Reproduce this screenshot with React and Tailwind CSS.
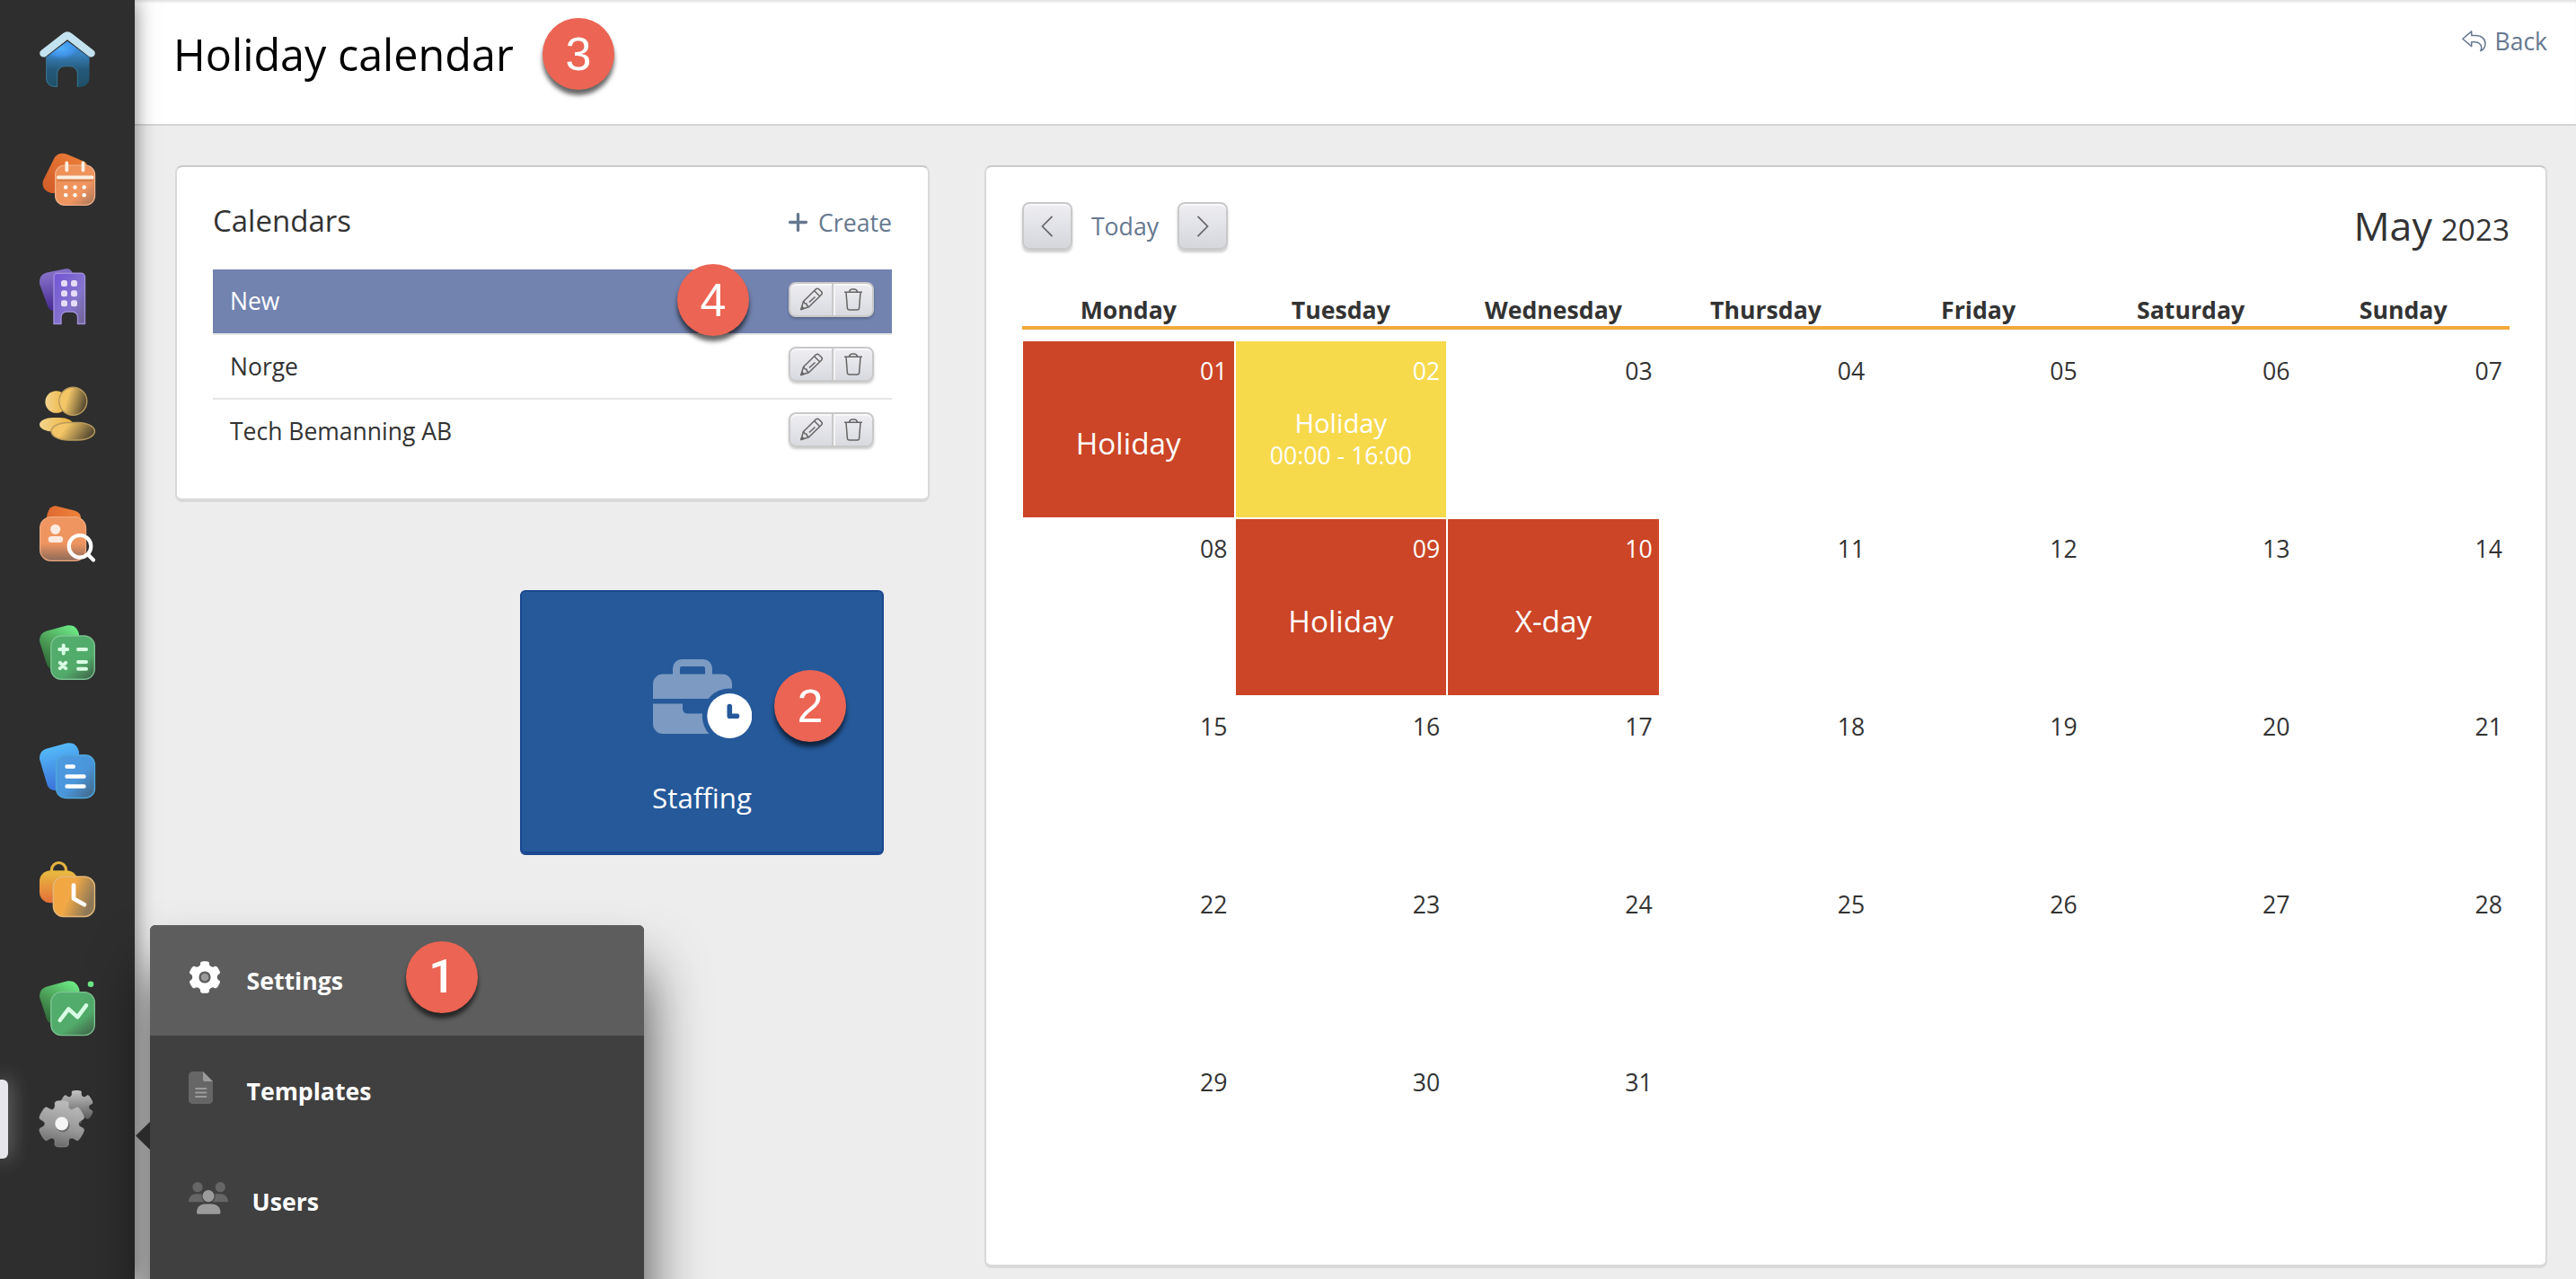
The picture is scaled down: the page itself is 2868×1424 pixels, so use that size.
import { clsx } from 'clsx';

const WEEKDAYS = ['Monday', 'Tuesday', 'Wednesday', 'Thursday', 'Friday', 'Saturday', 'Sunday'];

const CALENDARS = [
    { name: 'New', active: true },
    { name: 'Norge' },
    { name: 'Tech Bemanning AB' },
];

const HOLIDAYS = {
    1: { label: 'Holiday' },
    2: { label: 'Holiday', hours: '00:00 - 16:00' },
    9: { label: 'Holiday' },
    10: { label: 'X-day' },
};

// Six-toothed gear outline with softened corners
const gearPath = (cx, cy, outer, inner, tip = 14, base = 23, soft = 0.38) => {
    const points = [];
    for (let i = 0; i < 6; i++) {
        [[inner, -base], [outer, -tip], [outer, tip], [inner, base]].forEach(([r, offset]) => {
            const angle = ((i * 60 - 90 + offset) * Math.PI) / 180;
            points.push([cx + r * Math.cos(angle), cy + r * Math.sin(angle)]);
        });
    }
    const between = (a, b) => `${(a[0] + (b[0] - a[0]) * soft).toFixed(2)} ${(a[1] + (b[1] - a[1]) * soft).toFixed(2)}`;
    const d = points.map((p, i) => {
        const prev = points[(i + points.length - 1) % points.length];
        const next = points[(i + 1) % points.length];
        return `${i ? 'L' : 'M'}${between(p, prev)}Q${p[0].toFixed(2)} ${p[1].toFixed(2)} ${between(p, next)}`;
    });
    return `${d.join('')}Z`;
};

const Gradient = ({ id, from, via, to, x1 = 0, y1 = 0, x2 = 1, y2 = 1, stop = '60%' }) => (
    <linearGradient id={id} x1={x1} y1={y1} x2={x2} y2={y2}>
        <stop offset="0%" stopColor={from} />
        {via && <stop offset={stop} stopColor={via} />}
        <stop offset="100%" stopColor={to} />
    </linearGradient>
);

const NavIcon = ({ children, className }) => (
    <svg viewBox="0 0 62 62" className={clsx("w-[62px] h-[62px] shrink-0 overflow-visible", className)} fill="none">
        {children}
    </svg>
);

const HomeIcon = () => (
    <NavIcon>
        <defs>
            <Gradient id="home" from="#4aa5f6" via="#24597a" to="#1f4f66" x2={0} stop="62%" />
            <radialGradient id="homeGlow" cx="0.35" cy="0.28" r="0.5">
                <stop offset="0%" stopColor="#4fb0fa" />
                <stop offset="60%" stopColor="#4195ee" stopOpacity="0.8" />
                <stop offset="100%" stopColor="#2d6db0" stopOpacity="0" />
            </radialGradient>
        </defs>
        <path d="M31 11 55.5 29V52a10 10 0 0 1-10 10H42V47a8 8 0 0 0-8-8h-6a8 8 0 0 0-8 8V62h-3A10 10 0 0 1 7 52V29Z" fill="url(#home)" />
        <path d="M31 11 55.5 29V39H7V29Z" fill="url(#homeGlow)" />
        <path d="M7.6 28V52a9.4 9.4 0 0 0 9.4 9.4h2.6V47a8.4 8.4 0 0 1 8.4-8.4h6a8.4 8.4 0 0 1 8.4 8.4V61.4" stroke="#356f8b" strokeWidth="1.2" />
        <path d="M4.5 24.3 28.6 5.6q2.4-1.8 4.8 0L57.5 24.3" stroke="#c3e2ef" strokeWidth="8.6" strokeLinecap="round" strokeLinejoin="round" />
    </NavIcon>
);

const CalendarIcon = () => (
    <NavIcon>
        <defs>
            <Gradient id="calBack" from="#f08238" to="#cf5a28" x1={1} x2={0} />
            <Gradient id="calFront" from="#ee8f55" via="#ef9560" to="#a5745a" stop="65%" />
        </defs>
        <path d="M15 12C17.5 5 23 2 30 4.5L50 13Q55 16 53 22L40 48H13C6 46 2 41 4 34Z" fill="url(#calBack)" />
        <rect x="17.6" y="17" width="44" height="44.5" rx="10.5" fill="url(#calFront)" stroke="#f2b48f" strokeWidth="1.2" />
        <path d="M21 33.5h37" stroke="#c4703a" strokeWidth="3" strokeLinecap="round" opacity="0.6" />
        <path d="M21 30.5H58.5" stroke="#fbeee0" strokeWidth="4" strokeLinecap="round" />
        <path d="M30.3 14.5v8M48.5 14.5v8" stroke="#fbeee0" strokeWidth="3.8" strokeLinecap="round" />
        <g fill="#fff">
            {[41.5, 50.3].map((y) => (
                <g key={y}>
                    <circle cx="29.2" cy={y} r="2.2" />
                    <circle cx="39.5" cy={y} r="2.2" />
                    <circle cx="49.7" cy={y} r="2.2" />
                </g>
            ))}
        </g>
    </NavIcon>
);

const BuildingIcon = () => (
    <NavIcon>
        <defs>
            <Gradient id="bldBack" from="#8d79cf" to="#44288f" x1={0.2} x2={0.4} />
            <Gradient id="bldFront" from="#7154d6" via="#8574cd" to="#6e6390" />
        </defs>
        <path d="M0 17C-.5 9 3 6 8 4.5L28 .5C34-.5 36 2 38 8V47H15C10.5 46 9.5 43 8.5 40Z" fill="url(#bldBack)" />
        <path d="M20 5.2H46.5a4 4 0 0 1 4 4V61.5H42.5V54a6 6 0 0 0-6-6H30a6 6 0 0 0-6 6V61.5H16V9.2a4 4 0 0 1 4-4Z" fill="url(#bldFront)" stroke="#a08fd9" strokeWidth="1.4" />
        <g fill="#e6dcf8">
            {[13, 24.2, 35.2].map((y) => (
                <g key={y}>
                    <rect x="24" y={y} width="7" height="7" rx="2.5" />
                    <rect x="35" y={y} width="7" height="7" rx="2.5" />
                </g>
            ))}
        </g>
    </NavIcon>
);

const PeopleIcon = () => (
    <NavIcon>
        <defs>
            <Gradient id="pplBack" from="#f3d58f" to="#edb23a" y2={0} />
            <Gradient id="pplFront" from="#f5c566" via="#f3c667" to="#5e5034" y2={0.3} stop="38%" />
        </defs>
        <circle cx="18.7" cy="16.5" r="12.3" fill="url(#pplBack)" />
        <rect x="0" y="34" width="37.5" height="15.5" rx="15" ry="7.7" fill="url(#pplBack)" />
        <circle cx="37.3" cy="15.7" r="15.5" fill="url(#pplFront)" stroke="#b89a5c" strokeWidth="1.4" />
        <rect x="13" y="39.5" width="48.5" height="19.5" rx="19" ry="9.7" fill="url(#pplFront)" stroke="#b89a5c" strokeWidth="1.4" />
    </NavIcon>
);

const SearchIcon = () => (
    <NavIcon>
        <defs>
            <Gradient id="srchBack" from="#de692f" to="#f0843b" y2={0} />
            <Gradient id="srchFront" from="#ef9560" via="#ef9560" to="#8d6a5a" x2={0} />
        </defs>
        <path d="M7.5 16C8.5 5 12 .2 18 .2L39 5.5C44 7 46.5 10 46 16Z" fill="url(#srchBack)" />
        <rect x=".6" y="12.6" width="51" height="48.8" rx="12.5" fill="url(#srchFront)" stroke="#f0aa80" strokeWidth="1.2" />
        <circle cx="17.7" cy="26.3" r="5.6" fill="#fdeae0" />
        <rect x="9.7" y="34" width="16.5" height="7" rx="3.5" fill="#fdeae0" />
        <circle cx="45" cy="45.3" r="12.3" stroke="#fff" strokeWidth="4.2" />
        <path d="M54 54.5 60 60.5" stroke="#fff" strokeWidth="4.2" strokeLinecap="round" />
    </NavIcon>
);

const CalculatorIcon = () => (
    <NavIcon>
        <defs>
            <Gradient id="greenBack" from="#6ff08a" via="#4a9a54" to="#2f6a38" x1={0.9} x2={0.3} />
            <Gradient id="greenFront" from="#52ad6c" via="#52ab6a" to="#3d5c45" x1={0.3} />
        </defs>
        <path d="M0 19C0 12 3 9 8 7.5L30 1.5C37 0 42 3 44 11V50H14C10 49 8.5 46 7.5 43Z" fill="url(#greenBack)" />
        <rect x="12.8" y="13" width="48.5" height="48.3" rx="11.5" fill="url(#greenFront)" stroke="#7cc492" strokeWidth="1.4" />
        <path d="M26.7 23.5v9M22.2 28h9M43 28h9M22.8 42.8l6.4 6.4M29.2 42.8l-6.4 6.4M43 42h9M43 49.8h9" stroke="#d9fce4" strokeWidth="4" strokeLinecap="round" />
    </NavIcon>
);

const DocumentIcon = () => (
    <NavIcon>
        <defs>
            <Gradient id="docBack" from="#56c0fb" to="#3b6fd8" x1={0.3} x2={0.5} />
            <Gradient id="docFront" from="#4d9be2" via="#4a96db" to="#42647f" stop="55%" />
        </defs>
        <path d="M0 18C0 11 3 8 8 6.5L30 .5C37-1 42 2 44 10V53H16C11 52 9 49 8 45Z" fill="url(#docBack)" />
        <rect x="18.6" y="13.8" width="42.8" height="47.6" rx="10.5" fill="url(#docFront)" stroke="#4ea8dc" strokeWidth="1.5" />
        <path d="M30.5 26.5h7.3M30.5 37.5h19M30.5 48.5h19" stroke="#fff" strokeWidth="4.4" strokeLinecap="round" />
    </NavIcon>
);

const BagClockIcon = () => (
    <NavIcon>
        <defs>
            <Gradient id="bagBack" from="#e9bc40" to="#e46f3a" x2={0} />
            <Gradient id="bagFront" from="#f2a63f" via="#f1a846" to="#8d7857" y2={0.4} stop="50%" />
        </defs>
        <path d="M13.5 12V9.5a8 8 0 0 1 16 0V12" stroke="#e5b340" strokeWidth="3.2" />
        <rect x="0" y="10.2" width="42.5" height="36" rx="12" fill="url(#bagBack)" />
        <rect x="15.4" y="17" width="46" height="44.5" rx="11.5" fill="url(#bagFront)" stroke="#e3b777" strokeWidth="1.5" />
        <path d="M38 26.5V41.5L50 48.2" stroke="#fff" strokeWidth="4.7" strokeLinecap="round" strokeLinejoin="round" />
    </NavIcon>
);

const ChartIcon = () => (
    <NavIcon>
        <path d="M0 19C0 12 3 9 8 7.5L30 1.5C37 0 42 3 44.5 11V49H14C10 48 8.5 45 7.5 42Z" fill="url(#greenBack)" />
        <circle cx="57" cy="4.7" r="3.3" fill="#6be886" />
        <rect x="12.8" y="13.6" width="48.5" height="48" rx="11.5" fill="url(#greenFront)" stroke="#7cc492" strokeWidth="1.4" />
        <path d="M22.7 45 32.3 32.3 42.3 41.3 52 28.3" stroke="#d9fce4" strokeWidth="4.5" strokeLinecap="round" strokeLinejoin="round" />
    </NavIcon>
);

const GearsIcon = () => (
    <NavIcon className="-mt-2">
        <defs>
            <Gradient id="gearBack" from="#c4c4c4" to="#4c4c4c" x2={0} />
            <Gradient id="gearFront" from="#bdbdbd" via="#979797" to="#6a6a6a" x1={0.6} x2={0.4} />
        </defs>
        <path d={gearPath(41.3, 17.7, 19.6, 14, 17, 22)} fill="url(#gearBack)" />
        <path d={gearPath(24.7, 36.2, 27, 19, 17, 23)} fill="url(#gearFront)" stroke="#b4b4b4" strokeOpacity="0.4" strokeWidth="1" />
        <circle cx="26" cy="38" r="7.6" fill="#555" opacity="0.6" />
        <circle cx="24.7" cy="36" r="7.4" fill="#f5f5f5" />
    </NavIcon>
);

const Badge = ({ value, className }) => (
    <span
        className={clsx(
            "absolute z-20 flex h-20 w-20 items-center justify-center rounded-full bg-[#ec6453] text-[52px] leading-none text-white shadow-[0_6px_5px_rgba(0,0,0,0.6)]",
            value === 1 ? "font-[Roboto,sans-serif] font-medium" : "font-['Liberation_Sans',sans-serif]",
            className
        )}
    >
        {value}
    </span>
);

const Sidebar = () => (
    <aside className="relative z-10 flex h-full w-[150px] shrink-0 flex-col items-center gap-[70px] bg-[#2e2e2e] pt-[35px] shadow-[0_0_22px_rgba(0,0,0,0.5)]">
        <HomeIcon />
        <CalendarIcon />
        <BuildingIcon />
        <PeopleIcon />
        <SearchIcon />
        <CalculatorIcon />
        <DocumentIcon />
        <BagClockIcon />
        <ChartIcon />
        <GearsIcon />
        <span className="absolute left-0 top-[1202px] h-[88px] w-[9px] rounded-r-md bg-[#e6e6ec] shadow-[0_0_22px_rgba(255,255,255,0.5)]" />
    </aside>
);

const SettingsGlyph = () => (
    <svg viewBox="0 0 38 36" className="mb-2 h-9 w-[38px]">
        <path d={gearPath(18, 18, 18.4, 14, 15, 21)} fill="#fff" />
        <circle cx="18" cy="18" r="6.6" fill="#5e5e5e" />
        <circle cx="18" cy="18" r="4.3" fill="#9b9b9b" />
    </svg>
);

const TemplateGlyph = () => (
    <svg viewBox="0 0 38 36" className="mb-2 h-9 w-[38px]">
        <path d="M4.5 0H16L27 11V31.5A4.5 4.5 0 0 1 22.5 36H4.5A4.5 4.5 0 0 1 0 31.5V4.5A4.5 4.5 0 0 1 4.5 0Z" fill="#666" />
        <path d="M16 0 27 11H18a2 2 0 0 1-2-2Z" fill="#9b9b9b" />
        <path d="M8 19h11.5M8 23.5h11.5M8 28h11.5" stroke="#9b9b9b" strokeWidth="1.8" strokeLinecap="round" />
    </svg>
);

const UsersGlyph = () => (
    <svg viewBox="0 0 44 36" className="mb-2 h-9 w-11">
        <g fill="#666">
            <circle cx="10" cy="5.7" r="5.6" />
            <circle cx="35.3" cy="5.7" r="5.6" />
            <path d="M0 22.3C0 17 3.5 13.3 8 13.3H14.5C14 17 15 20 17.5 22.3Z" />
            <path d="M44 22.3C44 17 40.5 13.3 36 13.3H29.5C30 17 29 20 26.5 22.3Z" />
        </g>
        <circle cx="22" cy="15.7" r="6.6" fill="#9b9b9b" />
        <path d="M9 34C9 28 13 24.5 18 24.5H26C31 24.5 35.5 28 35.5 34Q35.5 35.8 34 35.8H10.5Q9 35.8 9 34Z" fill="#9b9b9b" />
    </svg>
);

const MenuItem = ({ icon, label, active }) => (
    <div className={clsx("flex h-[123.4px] items-center gap-[26.5px] pl-[43px]", active && "rounded-t-md bg-[#5d5d5d]")}>
        {icon}
        <span className="text-[26.67px] font-bold leading-[34px] text-white">{label}</span>
    </div>
);

const SettingsMenu = () => (
    <div className="absolute left-[167px] top-[1030px] z-20 h-[480px] w-[550px] rounded-md bg-[#404040] shadow-[0_50px_66px_rgba(0,0,0,0.72)]">
        <svg viewBox="0 0 16 31" className="absolute -left-4 top-[219px] h-[31px] w-4">
            <path d="M16 0V31L0 15.5Z" fill="#2a2a2a" />
        </svg>
        <MenuItem active label="Settings" icon={<SettingsGlyph />} />
        <MenuItem label="Templates" icon={<TemplateGlyph />} />
        <MenuItem label="Users" icon={<UsersGlyph />} />
        <Badge value={1} className="left-[285px] top-[18px]" />
    </div>
);

const RowActions = () => (
    <div className="flex h-[39px] w-[95px] rounded-lg border-2 border-[#c9c9c9] bg-gradient-to-b from-[#eeeef2] to-[#d9dae0] shadow-[0_2px_3px_rgba(0,0,0,0.22),inset_0_2px_0_#f8f8fb]">
        <button className="flex flex-1 items-center justify-center pl-0.5">
            <svg viewBox="0 0 26 26" className="h-[26px] w-[26px]" fill="none" stroke="#666" strokeWidth="1.5" strokeLinejoin="round">
                <path d="M.8 24.5 3.5 15.5 17.5 1.8Q19.2.6 20.8 2L23.6 4.7Q25 6.5 23.6 8L9.5 21.8Z" />
                <path d="M3.5 15.5 5 17.7 7 18.2 7.5 20.2 9.5 21.8M15.7 3.7 21.6 9.7M10 16.5 16.5 10.5" />
                <path d="M1 24.5 2 21.5 3.8 23.3Z" fill="#666" />
            </svg>
        </button>
        <button className="flex w-[45px] items-center justify-center border-l-2 border-[#c9c9c9] shadow-[inset_2px_0_0_#f3f3f6]">
            <svg viewBox="0 0 20 25" className="h-[25px] w-5" fill="none" stroke="#666" strokeWidth="1.5" strokeLinejoin="round">
                <path d="M0 4.3H20M5.5 4Q6 1 9 1H11Q14 1 14.5 4M2 4.5 3.4 22Q3.6 24 5.6 24H14.4Q16.4 24 16.6 22L18 4.5" />
            </svg>
        </button>
    </div>
);

const Card = ({ children, className }) => (
    <section className={clsx("rounded-lg border-2 border-b-4 border-[#d9d9d9] border-t-[#cacaca] bg-white px-10 pt-[39px]", className)}>
        {children}
    </section>
);

const CalendarList = () => (
    <Card className="h-[375px] w-[840px]">
        <div className="mt-px flex h-10 items-baseline justify-between">
            <h2 className="text-[33px] leading-10">Calendars</h2>
            <button className="flex items-center gap-3 text-[26.67px] leading-9 text-[#66788f]">
                <svg viewBox="0 0 21 21" className="h-[21px] w-[21px]" stroke="currentColor" strokeWidth="3.3" strokeLinecap="round">
                    <path d="M10.5 1.6V19.4M1.6 10.5H19.4" />
                </svg>
                Create
            </button>
        </div>
        <ul className="mt-[34px]">
            {CALENDARS.map(({ name, active }) => (
                <li
                    key={name}
                    className={clsx(
                        "relative flex h-[72.5px] items-center justify-between border-b-2 border-[#e6e6e6] pl-[19px] pr-5 text-[26.5px] last:border-transparent",
                        active && "bg-[#7283af] bg-clip-padding text-white"
                    )}
                >
                    <span className="pt-0.5">{name}</span>
                    <div className="-mt-1"><RowActions /></div>
                    {active && <Badge value={4} className="left-[517px] -top-1.5" />}
                </li>
            ))}
        </ul>
    </Card>
);

const StaffingTile = () => (
    <div className="relative ml-[384px] mt-[98px] flex h-[295px] w-[405px] flex-col items-center rounded-md border-2 border-b-4 border-[#1b4890] bg-[#25599a] pt-[75px]">
        <svg viewBox="0 0 110 89" className="h-[89px] w-[110px]">
            <g fill="#7c9ac2">
                <path fillRule="evenodd" d="M22 17V10A10 10 0 0 1 32 0H56A10 10 0 0 1 66 10V17ZM30 17H58V10A2 2 0 0 0 56 8H32A2 2 0 0 0 30 10Z" />
                <path d="M0 44V27.5A11 11 0 0 1 11 16.5H77A11 11 0 0 1 88 27.5V44Z" />
                <path d="M0 49.5H33V55A5.5 5.5 0 0 0 38.5 60.5H70V83H11A11 11 0 0 1 0 72Z" />
            </g>
            <circle cx="85.3" cy="63" r="30.5" fill="#25599a" />
            <circle cx="85.3" cy="63" r="25" fill="#fff" />
            <path d="M85.3 52.5V63.3H93.5" stroke="#25599a" strokeWidth="5.6" strokeLinecap="round" strokeLinejoin="round" fill="none" />
        </svg>
        <span className="mt-[45px] text-[31.3px] leading-10 text-white">Staffing</span>
        <Badge value={2} className="left-[281px] top-[87px]" />
    </div>
);

const NavButton = ({ d }) => (
    <button className="flex h-[53px] w-14 items-center justify-center rounded-lg border-2 border-[#c9c9c9] bg-gradient-to-b from-[#eeeef2] to-[#d5d7dd] shadow-[0_3px_3px_rgba(0,0,0,0.2),inset_0_2px_0_#f8f8fb]">
        <svg viewBox="0 0 14 24" className="h-6 w-3.5" fill="none" stroke="#666" strokeWidth="1.7">
            <path d={d} />
        </svg>
    </button>
);

const DayCell = ({ day }) => {
    const holiday = HOLIDAYS[day];

    return (
        <div className="h-[198px] p-px">
            <div
                className={clsx(
                    "h-full pt-[18px]",
                    holiday && "text-white",
                    holiday && (holiday.hours ? "bg-[#f7d94c]" : "bg-[#cb4526]")
                )}
            >
                <div className="pr-[7px] text-right text-[26.67px] leading-[30px]">{String(day).padStart(2, '0')}</div>
                {holiday && !holiday.hours && (
                    <div className="mt-10 text-center text-[33.33px] leading-[50px]">{holiday.label}</div>
                )}
                {holiday && holiday.hours && (
                    <div className="mt-[25px] text-center text-[26.67px] leading-9">
                        <div className="text-[29.3px]">{holiday.label}</div>
                        <div>{holiday.hours}</div>
                    </div>
                )}
            </div>
        </div>
    );
};

const MonthView = () => (
    <Card className="h-[1228px] w-[1740px]">
        <div className="flex h-[53px] items-center justify-between">
            <div className="flex items-center">
                <NavButton d="M12.5.8 1.5 12 12.5 23.2" />
                <span className="w-[117px] text-center text-[26.67px] text-[#66788f]">Today</span>
                <NavButton d="M1.5.8 12.5 12 1.5 23.2" />
            </div>
            <div className="mt-0.5 flex items-baseline gap-2.5 leading-[53px]">
                <span className="text-[44.67px]">May</span>
                <span className="text-[33.33px]">2023</span>
            </div>
        </div>
        <div className="mt-[49px] grid grid-cols-7 border-b-4 border-[#f2a93b] text-center text-[26.67px] font-bold leading-9">
            {WEEKDAYS.map((name) => (
                <div key={name}>{name}</div>
            ))}
        </div>
        <div className="mt-3 grid grid-cols-7">
            {Array.from({ length: 31 }, (_, i) => (
                <DayCell key={i} day={i + 1} />
            ))}
        </div>
    </Card>
);

const Header = () => (
    <header className="relative flex h-[140px] items-start justify-between border-b-2 border-[#d5d5d5] bg-white pl-[43px] pr-8 shadow-[inset_0_3px_3px_-1px_rgba(0,0,0,0.12)]">
        <h1 className="text-[48.5px] leading-[120px] text-black">Holiday calendar</h1>
        <Badge value={3} className="left-[454px] top-5" />
        <a className="mt-[26px] flex items-center gap-2.5 text-[26.5px] leading-10 text-[#66788f]">
            <svg viewBox="0 0 27 24" className="h-6 w-[27px]" fill="none" stroke="currentColor" strokeWidth="1.5" strokeLinejoin="round">
                <path d="M.9 9.2 10.7.9V5.6H15C22 5.6 26 9.5 26 14.5 26 18.5 24 21.3 20.7 22.8 23.5 17.5 20 12.7 14 12.7H10.7V17.6Z" />
            </svg>
            Back
        </a>
    </header>
);

export default function App() {
    return (
        <div className="relative flex h-[1424px] w-[2868px] overflow-hidden bg-[#ededed] font-['Open_Sans',sans-serif] text-[#333]">
            <Sidebar />
            <main className="flex flex-1 flex-col">
                <Header />
                <div className="flex items-start justify-between pl-[45px] pr-8 pt-11">
                    <div>
                        <CalendarList />
                        <StaffingTile />
                    </div>
                    <MonthView />
                </div>
            </main>
            <SettingsMenu />
        </div>
    );
}
